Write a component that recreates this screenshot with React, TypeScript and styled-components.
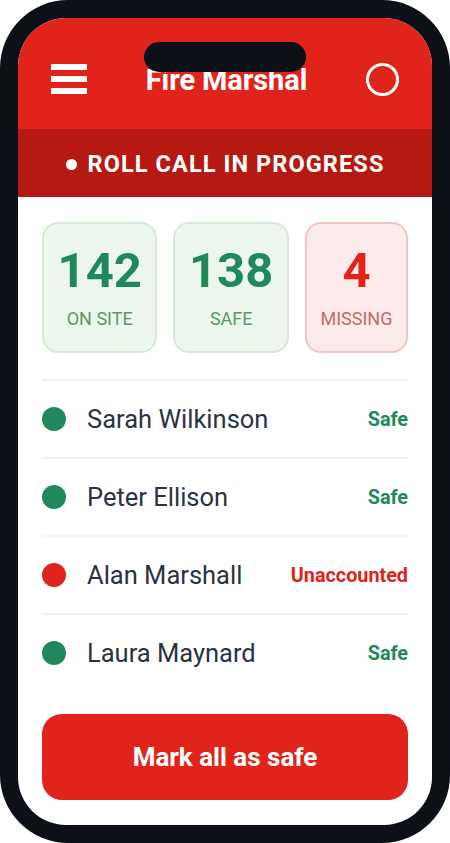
import * as React from 'react';
import styled, { createGlobalStyle } from 'styled-components';

const GlobalStyle = createGlobalStyle`
  html, body {
    margin: 0;
    padding: 0;
    background: #ffffff;
  }
  * {
    box-sizing: border-box;
  }
`;

const RED = '#e0241b';
const GREEN = '#20895a';

const Phone = styled.div`
  position: relative;
  width: 450px;
  height: 843px;
  padding: 18px;
  background: #0d1117;
  border-radius: 68px;
  font-family: Roboto, 'Liberation Sans', sans-serif;
`;

const Notch = styled.div`
  position: absolute;
  top: 42px;
  left: 144px;
  width: 162px;
  height: 30px;
  border-radius: 15px;
  background: #0d1117;
  z-index: 2;
`;

const Screen = styled.div`
  height: 100%;
  background: #ffffff;
  border-radius: 48px;
  overflow: hidden;
  display: flex;
  flex-direction: column;
`;

const Header = styled.header`
  height: 111px;
  padding: 11px 33px 0;
  background: ${RED};
  display: flex;
  align-items: center;
  justify-content: space-between;
`;

const Burger = styled.div`
  width: 36px;
  display: flex;
  flex-direction: column;
  gap: 6px;

  span {
    display: block;
    height: 6px;
    background: #ffffff;
  }
`;

const Title = styled.h1`
  margin: 0;
  padding-top: 2px;
  color: #ffffff;
  font-size: 29px;
  font-weight: 700;
  letter-spacing: -0.1px;
`;

const Ring = styled.div`
  width: 33px;
  height: 33px;
  border: 3px solid #ffffff;
  border-radius: 50%;
`;

const Banner = styled.div`
  height: 68px;
  padding-top: 2px;
  background: #b51912;
  display: flex;
  align-items: center;
  justify-content: center;
  gap: 11px;
  color: #ffffff;
  font-size: 23.5px;
  font-weight: 700;
  letter-spacing: 1.1px;
`;

const Pulse = styled.span`
  width: 11px;
  height: 11px;
  border-radius: 50%;
  background: #ffffff;
`;

const Content = styled.main`
  padding: 25px 24px 0;
`;

const Stats = styled.div`
  display: flex;
  gap: 16px;
`;

const StatCard = styled.div<{ $alert?: boolean }>`
  flex: 1 1 auto;
  height: 131px;
  border-radius: 16px;
  border: 2px solid ${p => (p.$alert ? '#f4c4c3' : '#d4ead3')};
  background: ${p => (p.$alert ? '#fdeaea' : '#edf6ed')};
  display: flex;
  flex-direction: column;
  align-items: center;
  padding-top: 18px;
`;

const StatValue = styled.div<{ $alert?: boolean }>`
  color: ${p => (p.$alert ? RED : GREEN)};
  font-size: 49px;
  font-weight: 700;
  line-height: 58px;
`;

const StatLabel = styled.div<{ $alert?: boolean }>`
  margin-top: 8px;
  color: ${p => (p.$alert ? '#c46a68' : '#5e9668')};
  font-size: 18px;
  line-height: 22px;
`;

const List = styled.ul`
  list-style: none;
  margin: 26px 0 0;
  padding: 0;
`;

const Row = styled.li`
  height: 78px;
  border-top: 2px solid #f0f1f3;
  display: flex;
  align-items: center;
`;

const Dot = styled.span<{ $alert?: boolean }>`
  width: 24px;
  height: 24px;
  border-radius: 50%;
  background: ${p => (p.$alert ? RED : GREEN)};
  margin-right: 21px;
`;

const Name = styled.span`
  flex: 1;
  color: #2a3342;
  font-size: 25.5px;
`;

const Status = styled.span<{ $alert?: boolean }>`
  color: ${p => (p.$alert ? RED : GREEN)};
  font-size: 19.8px;
  font-weight: 700;
`;

const Action = styled.button`
  display: block;
  width: 100%;
  height: 86px;
  margin-top: 23px;
  border: none;
  border-radius: 20px;
  background: ${RED};
  color: #ffffff;
  font-family: inherit;
  font-size: 26px;
  font-weight: 700;
`;

const stats = [
  { value: '142', label: 'ON SITE' },
  { value: '138', label: 'SAFE' },
  { value: '4', label: 'MISSING', alert: true },
];

const people = [
  { name: 'Sarah Wilkinson', status: 'Safe' },
  { name: 'Peter Ellison', status: 'Safe' },
  { name: 'Alan Marshall', status: 'Unaccounted', alert: true },
  { name: 'Laura Maynard', status: 'Safe' },
];

export default function App() {
  return (
    <>
      <GlobalStyle />
      <Phone>
        <Notch />
        <Screen>
          <Header>
            <Burger>
              <span />
              <span />
              <span />
            </Burger>
            <Title>Fire Marshal</Title>
            <Ring />
          </Header>
          <Banner>
            <Pulse />
            ROLL CALL IN PROGRESS
          </Banner>
          <Content>
            <Stats>
              {stats.map(s => (
                <StatCard key={s.label} $alert={s.alert}>
                  <StatValue $alert={s.alert}>{s.value}</StatValue>
                  <StatLabel $alert={s.alert}>{s.label}</StatLabel>
                </StatCard>
              ))}
            </Stats>
            <List>
              {people.map(p => (
                <Row key={p.name}>
                  <Dot $alert={p.alert} />
                  <Name>{p.name}</Name>
                  <Status $alert={p.alert}>{p.status}</Status>
                </Row>
              ))}
            </List>
            <Action>Mark all as safe</Action>
          </Content>
        </Screen>
      </Phone>
    </>
  );
}
